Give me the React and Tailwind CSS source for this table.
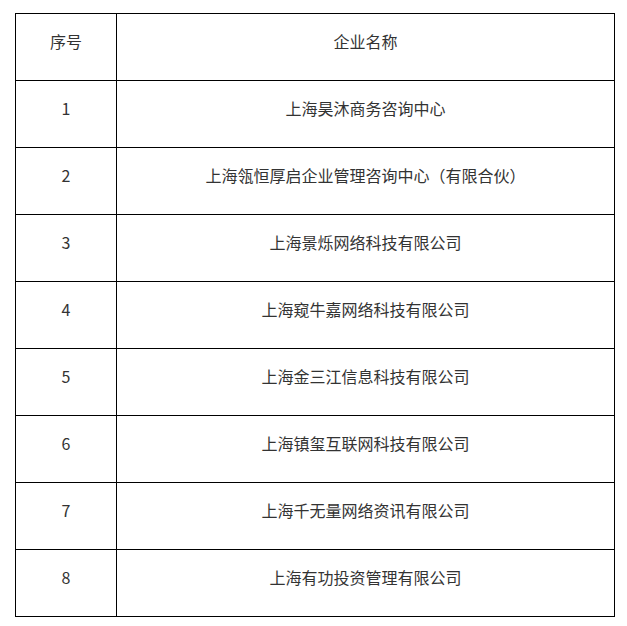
import React from 'react'

const rows = [
  '上海昊沐商务咨询中心',
  '上海瓴恒厚启企业管理咨询中心（有限合伙）',
  '上海景烁网络科技有限公司',
  '上海\u7aa5牛嘉网络科技有限公司',
  '上海金三江信息科技有限公司',
  '上海镇玺互联网科技有限公司',
  '上海千无量网络资讯有限公司',
  '上海有功投资管理有限公司'
]

export default function App() {
  return (
    <div className="bg-white min-h-screen pt-[13px] pl-[15px]" style={{ fontFamily: '"Noto Sans CJK SC", "Noto Sans", sans-serif' }}>
      <table className="border-collapse w-[600px] text-[16px] leading-6 text-[#333]">
        <tbody>
          <tr className="h-[67px]">
            <td className="border border-black w-[101px] text-center pb-3">序号</td>
            <td className="border border-black text-center pb-3">企业名称</td>
          </tr>
          {rows.map((name, i) => (
            <tr key={i} className="h-[67px]">
              <td className="border border-black text-center pb-3">{i + 1}</td>
              <td className="border border-black text-center pb-3">{name}</td>
            </tr>
          ))}
        </tbody>
      </table>
    </div>
  )
}
